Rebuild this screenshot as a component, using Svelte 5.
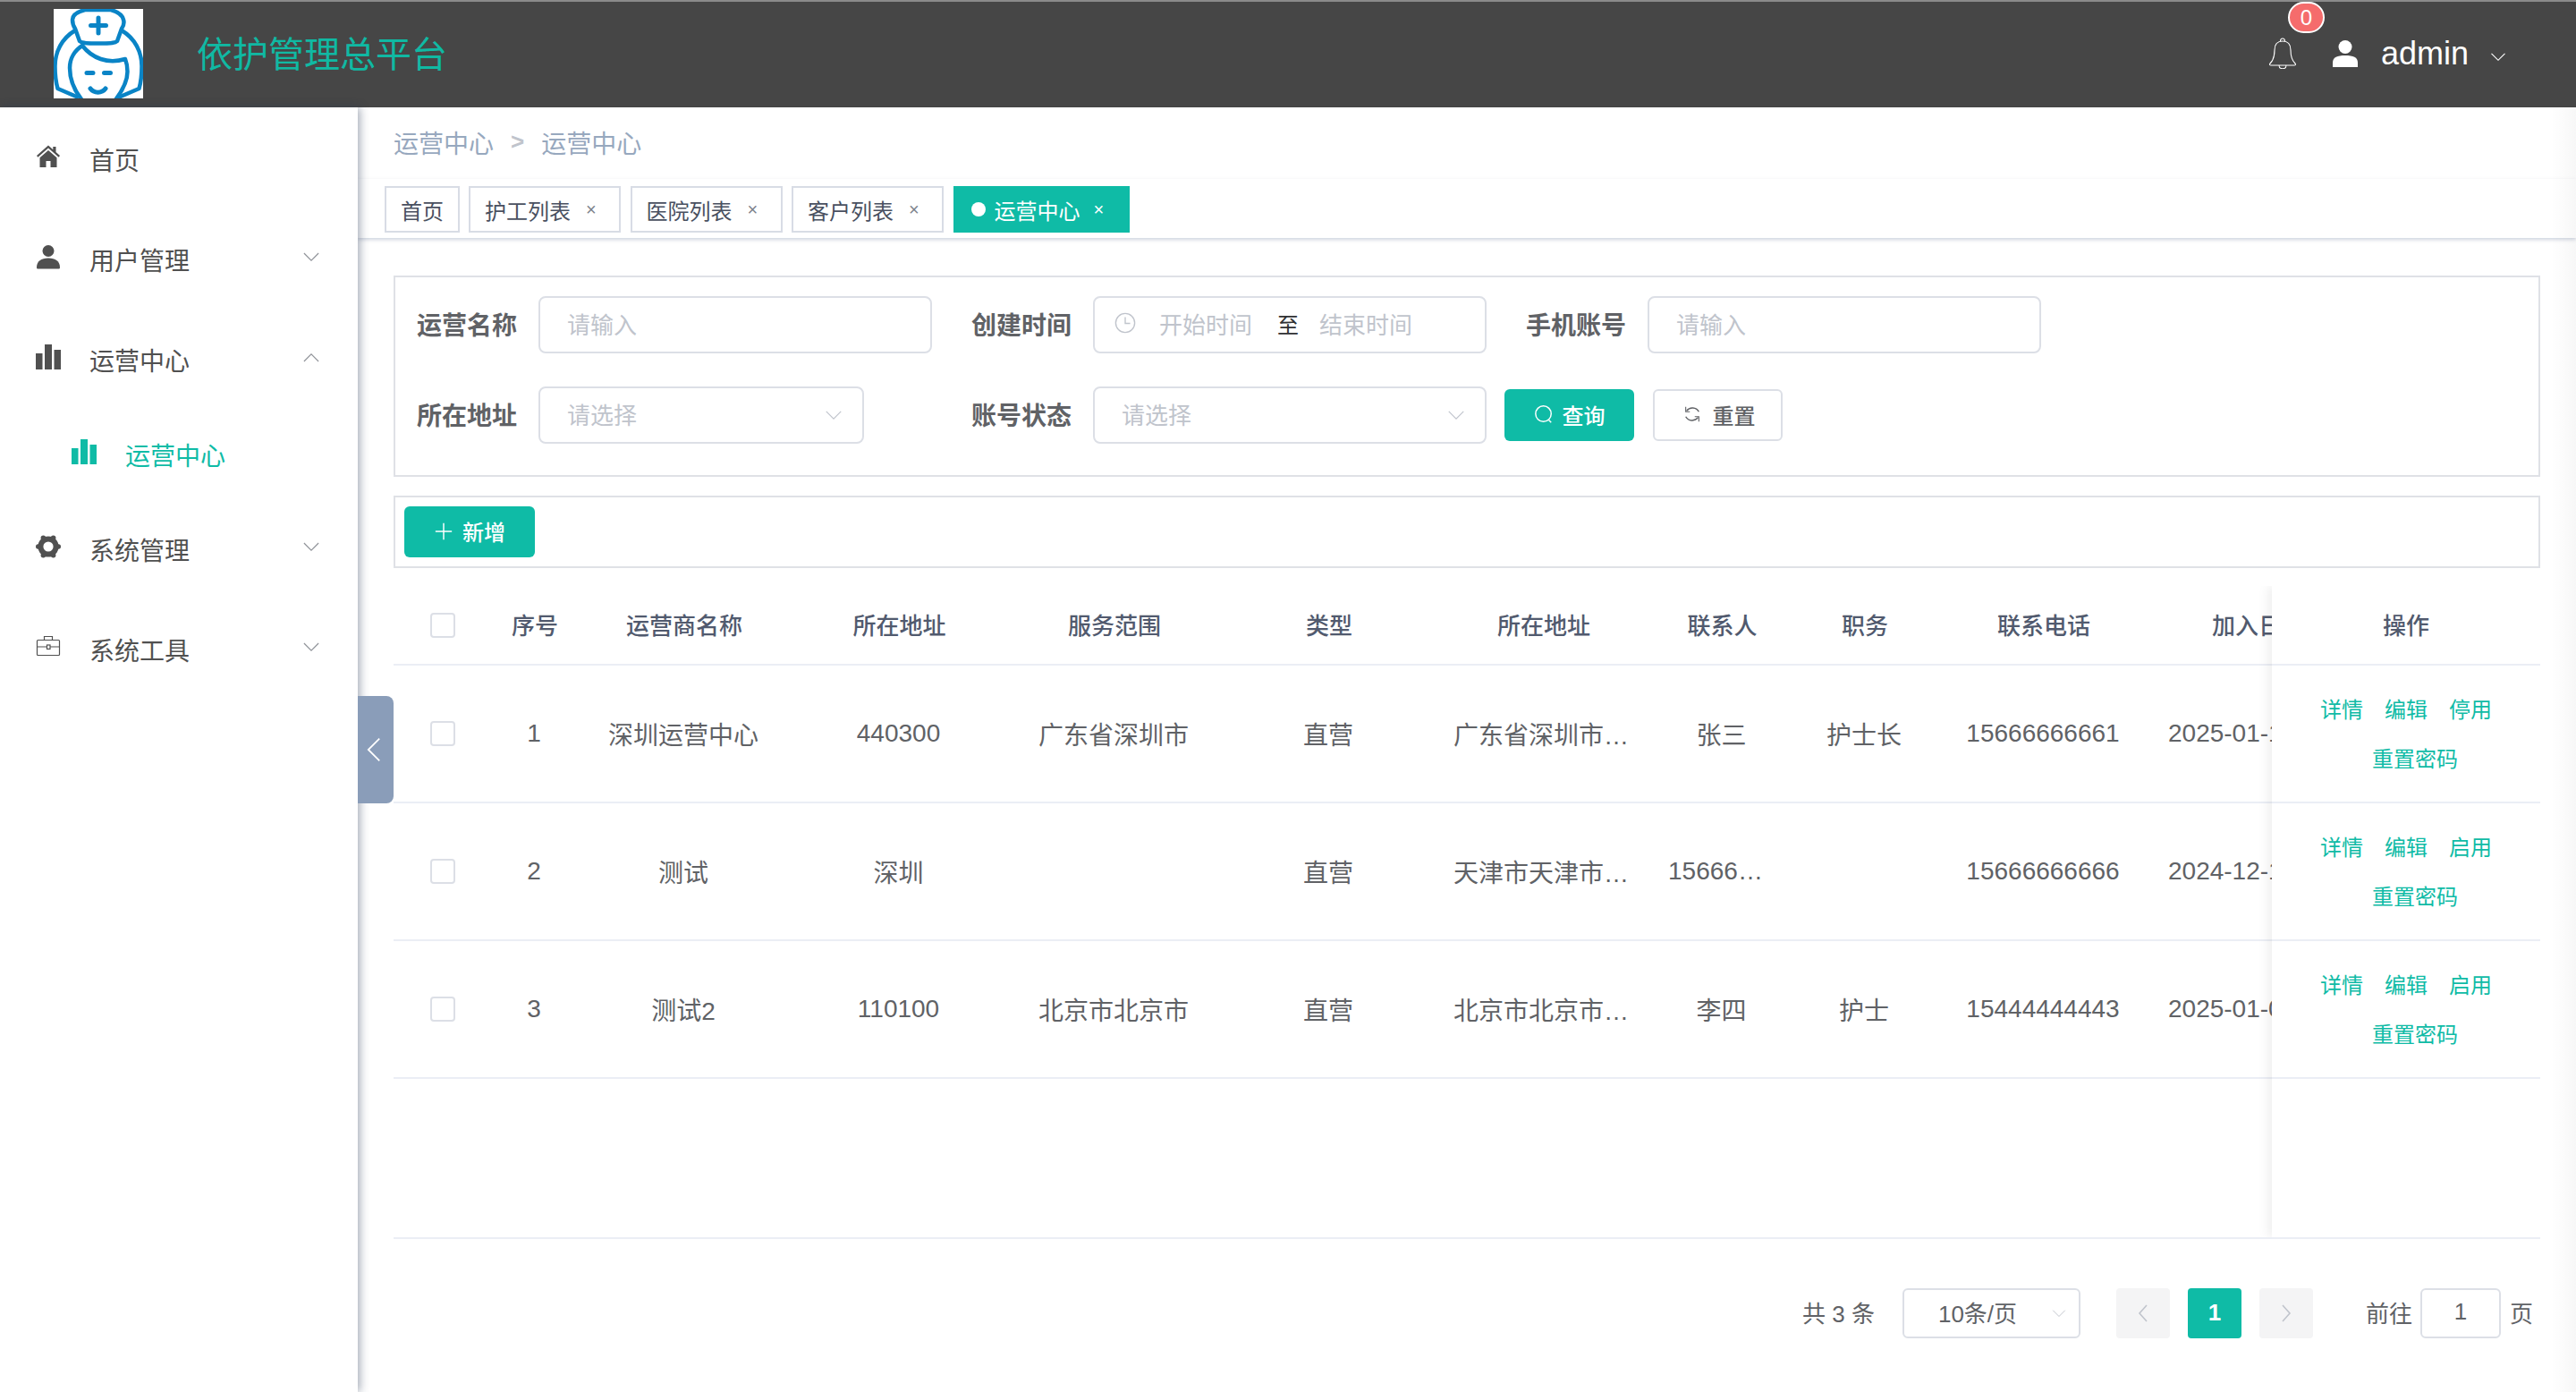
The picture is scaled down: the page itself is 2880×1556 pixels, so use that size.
<script>
  const menu = [
    { label: "首页", icon: "home", h: 112 },
    { label: "用户管理", icon: "user", h: 112, arrow: "down" },
    { label: "运营中心", icon: "chart", h: 112, arrow: "up" },
    { label: "运营中心", icon: "chart", h: 100, sub: true },
    { label: "系统管理", icon: "gear", h: 112, arrow: "down" },
    { label: "系统工具", icon: "case", h: 112, arrow: "down" }
  ];

  const tabs = ["护工列表", "医院列表", "客户列表"];

  const columns = [
    { title: "序号", key: "no", width: 94 },
    { title: "运营商名称", key: "name", width: 240 },
    { title: "所在地址", key: "code", width: 241 },
    { title: "服务范围", key: "scope", width: 240 },
    { title: "类型", key: "type", width: 240 },
    { title: "所在地址", key: "addr", width: 240 },
    { title: "联系人", key: "contact", width: 159 },
    { title: "职务", key: "job", width: 160 },
    { title: "联系电话", key: "phone", width: 240 },
    { title: "加入日期", key: "date", width: 240 }
  ];

  const rows = [
    { no: 1, name: "深圳运营中心", code: "440300", scope: "广东省深圳市", type: "直营", addr: "广东省深圳市南山区科技园", contact: "张三", job: "护士长", phone: "15666666661", date: "2025-01-10 10:20:30", toggle: "停用" },
    { no: 2, name: "测试", code: "深圳", scope: "", type: "直营", addr: "天津市天津市和平区南京路", contact: "15666666666", job: "", phone: "15666666666", date: "2024-12-18 09:12:45", toggle: "启用" },
    { no: 3, name: "测试2", code: "110100", scope: "北京市北京市", type: "直营", addr: "北京市北京市朝阳区建国路", contact: "李四", job: "护士", phone: "15444444443", date: "2025-01-06 16:40:12", toggle: "启用" }
  ];

  const lobes = [0, 60, 120, 180, 240, 300].map((deg) => ({
    x: 14 + 11.2 * Math.cos((deg * Math.PI) / 180),
    y: 14 + 11.2 * Math.sin((deg * Math.PI) / 180)
  }));
</script>

{#snippet chevron(dir, cls)}
  <svg class={cls} viewBox="0 0 20 12" fill="none" stroke="currentColor" stroke-width="1.3">
    {#if dir === "up"}
      <path d="M1 11 10 2l9 9" />
    {:else}
      <path d="M1 1l9 9 9-9" />
    {/if}
  </svg>
{/snippet}

{#snippet menuIcon(name)}
  <svg class="menu-icon" viewBox="0 0 28 28" fill="currentColor">
    {#if name === "home"}
      <path d="M14 1.500 1 13l1.400 1.700L14 4.600l11.600 10.100L27 13l-4.500-4V3h-3.200v3.200z" />
      <path d="M14 7 4.500 15.200V26h7v-7h5v7h7V15.200z" />
    {:else if name === "user"}
      <circle cx="14" cy="7.500" r="6.500" />
      <path d="M1 26c0-7 5-10.500 13-10.500S27 19 27 26c0 1-.7 1.500-1.500 1.500h-23C1.700 27.500 1 27 1 26z" />
    {:else if name === "chart"}
      <rect x="0" y="10" width="7.500" height="18" />
      <rect x="10" y="0" width="8" height="28" />
      <rect x="20.500" y="6" width="7.500" height="22" />
    {:else if name === "gear"}
      <circle cx="14" cy="14" r="8.600" fill="none" stroke="currentColor" stroke-width="6" />
      {#each lobes as lobe}
        <circle cx={lobe.x} cy={lobe.y} r="2.800" />
      {/each}
    {:else}
      <g fill="none" stroke="currentColor" stroke-width="1.200">
        <rect x="1.500" y="6.500" width="25" height="17" rx="1" />
        <path d="M9.500 6.500V2.500h9v4M1.500 14h11M16 14h10.500" />
        <rect x="12.500" y="12" width="3.500" height="4.500" />
      </g>
    {/if}
  </svg>
{/snippet}

<div class="page">
  <header class="topbar">
    <svg class="logo" viewBox="0 0 100 100">
      <rect width="100" height="100" fill="#fff" />
      <g fill="none" stroke="#0a84c6" stroke-width="4.500" stroke-linecap="round" stroke-linejoin="round">
        <path d="M24 24C9 33 1.500 48 1.500 64c0 9 1 18 3 25l21 9" />
        <path d="M76 24c15 9 22.500 24 22.500 40 0 9-1 18-3 25l-21 9" />
        <path d="M35 1C27 3 21 7 21 12c0 3 1 7 3 10l5 14c2 2 6 2.500 21 2.500S69 38 71 36l5-14c2-3 3-7 2-10-1-5-7-9-14-11z" fill="#fff" />
        <path d="M50 10v17M41.500 18.500h17" stroke-width="5" />
        <path d="M32 41C24 46 18 55 18 66c0 13 6 26 13 35M32 41c11 14 28 21 48 15 2 5 2.500 10 2.500 14 0 12-7 23-13 31" />
        <path d="M37 71.500h7M56.500 71.500h7M41 89c4 5.500 13 5.500 17 0" stroke-width="5" />
      </g>
    </svg>
    <h1 class="brand">依护管理总平台</h1>
    <div class="top-right">
      <div class="bell-wrap">
        <svg class="bell" viewBox="0 0 32 36" fill="none" stroke="#fff" stroke-width="1.100">
          <path d="M16 5c-6 0-9 4-9 10 0 7-1 11-5 15-1 1-.5 2 1 2h26c1.500 0 2-1 1-2-4-4-5-8-5-15 0-6-3-10-9-10zM13.500 5c0-4 5-4 5 0M12 32c0 5 8 5 8 0" />
        </svg>
        <span class="badge">0</span>
      </div>
      <svg class="top-user" viewBox="0 0 28 30" fill="#fff">
        <circle cx="14" cy="7.500" r="7.500" />
        <path d="M0 30v-5c0-6 5-8 14-8s14 2 14 8v5z" />
      </svg>
      <span class="admin">admin</span>
      {@render chevron("down", "top-arrow")}
    </div>
  </header>

  <div class="body">
    <aside class="sidebar">
      {#each menu as item}
        <div class="menu-row" class:sub={item.sub} style="height: {item.h}px;">
          {@render menuIcon(item.icon)}
          <span class="menu-label">{item.label}</span>
          {#if item.arrow}
            {@render chevron(item.arrow, "menu-arrow")}
          {/if}
        </div>
      {/each}
    </aside>

    <main class="main">
      <button class="collapse" aria-label="收起">
        <svg viewBox="0 0 18 30" fill="none" stroke="#fff" stroke-width="2"><path d="M16 1 2 15l14 14" /></svg>
      </button>

      <nav class="crumbs">
        <span>运营中心</span>
        <span class="sep">&gt;</span>
        <span>运营中心</span>
      </nav>

      <div class="tabs">
        <span class="tab home">首页</span>
        {#each tabs as tab}
          <span class="tab">{tab}<i class="close">×</i></span>
        {/each}
        <span class="tab active"><b class="dot"></b>运营中心<i class="close">×</i></span>
      </div>

      <div class="content">
        <section class="filter">
          <div class="row">
            <div class="item">
              <span class="label">运营名称</span>
              <div class="field wide"><span class="ph">请输入</span></div>
            </div>
            <div class="item">
              <span class="label">创建时间</span>
              <div class="field wide date">
                <svg class="clock" viewBox="0 0 26 26" fill="none" stroke="#c0c4cc" stroke-width="1.500">
                  <circle cx="13" cy="13" r="11.500" /><path d="M13 6v7.500h6" />
                </svg>
                <span class="ph start">开始时间</span>
                <span class="to">至</span>
                <span class="ph">结束时间</span>
              </div>
            </div>
            <div class="item last">
              <span class="label">手机账号</span>
              <div class="field wide"><span class="ph">请输入</span></div>
            </div>
          </div>
          <div class="row second">
            <div class="item short">
              <span class="label">所在地址</span>
              <div class="field select narrow"><span class="ph">请选择</span>{@render chevron("down", "sel-arrow")}</div>
            </div>
            <div class="item tight">
              <span class="label">账号状态</span>
              <div class="field select wide"><span class="ph">请选择</span>{@render chevron("down", "sel-arrow")}</div>
            </div>
            <button class="btn primary">
              <svg class="btn-icon" viewBox="0 0 24 24" fill="none" stroke="currentColor" stroke-width="1.600">
                <circle cx="11.500" cy="11.500" r="9.500" /><path d="m18 19 3 3" />
              </svg>查询
            </button>
            <button class="btn plain">
              <svg class="btn-icon" viewBox="0 0 24 24" fill="none" stroke="currentColor" stroke-width="1.600">
                <path d="M5 8a9 9 0 0 1 15 1M19 16a9 9 0 0 1-15-1" /><path d="M4 3v6h5M20 21v-6h-5" stroke-width="1.200" />
              </svg>重置
            </button>
          </div>
        </section>

        <section class="actions">
          <button class="btn primary add">
            <svg class="btn-icon" viewBox="0 0 24 24" fill="none" stroke="currentColor" stroke-width="1.600"><path d="M12 2v20M2 12h20" /></svg>新增
          </button>
        </section>

        <section class="table">
          <div class="scroll">
            <div class="tr head">
              <div class="cell check"><span class="box"></span></div>
              {#each columns as col}
                <div class="cell" style="width: {col.width}px;">{col.title}</div>
              {/each}
            </div>
            {#each rows as row}
              <div class="tr">
                <div class="cell check"><span class="box"></span></div>
                {#each columns as col}
                  <div class="cell" style="width: {col.width}px;"><span class="ell">{row[col.key]}</span></div>
                {/each}
              </div>
            {/each}
          </div>
          <div class="fixed">
            <div class="fx head">操作</div>
            {#each rows as row}
              <div class="fx links">
                <a href="#a">详情</a><a href="#a">编辑</a><a href="#a">{row.toggle}</a><a href="#a" class="reset">重置密码</a>
              </div>
            {/each}
          </div>
        </section>

        <footer class="pager">
          <span>共 3 条</span>
          <div class="page-size">10条/页{@render chevron("down", "size-arrow")}</div>
          <span class="pg off">
            <svg viewBox="0 0 12 20" fill="none" stroke="currentColor" stroke-width="1.600"><path d="M10 1 2 10l8 9" /></svg>
          </span>
          <span class="pg on">1</span>
          <span class="pg off">
            <svg viewBox="0 0 12 20" fill="none" stroke="currentColor" stroke-width="1.600"><path d="m2 1 8 9-8 9" /></svg>
          </span>
          <span class="goto">前往</span>
          <div class="jump">1</div>
          <span>页</span>
        </footer>
      </div>
    </main>
  </div>
</div>

<style>
  :global(body) {
    margin: 0;
    background: #fff;
  }

  .page {
    width: 2880px;
    height: 1556px;
    overflow: hidden;
    display: flex;
    flex-direction: column;
    font-family: "Liberation Sans", "Noto Sans CJK SC", sans-serif;
    color: #606266;
  }

  /* top bar */
  .topbar {
    height: 120px;
    box-sizing: border-box;
    flex: none;
    display: flex;
    align-items: center;
    padding-left: 60px;
    background: #464646;
    border-top: 2px solid #8a8a8a;
  }

  .logo {
    width: 100px;
    height: 100px;
    flex: none;
    margin-top: -2px;
  }

  .brand {
    margin: -6px 0 0 60px;
    font-size: 40px;
    font-weight: 400;
    color: #10b9a3;
  }

  .top-right {
    margin-left: auto;
    display: flex;
    align-items: center;
    padding-right: 78px;
    color: #fff;
  }

  .bell-wrap {
    position: relative;
    width: 32px;
    height: 36px;
    margin-top: -4px;
    margin-right: 40px;
  }

  .bell {
    width: 32px;
    height: 36px;
    display: block;
  }

  .badge {
    position: absolute;
    left: 22px;
    top: -39px;
    width: 41px;
    height: 35px;
    box-sizing: border-box;
    border: 2px solid #fff;
    border-radius: 18px;
    background: #f56c6c;
    font-size: 24px;
    line-height: 31px;
    text-align: center;
    color: #fff;
  }

  .top-user {
    width: 28px;
    height: 30px;
    margin-top: -3px;
    margin-right: 26px;
  }

  .admin {
    font-size: 36px;
    margin-top: -2px;
    line-height: 40px;
  }

  .top-arrow {
    width: 18px;
    height: 10px;
    margin: 6px 0 0 24px;
  }

  /* sidebar */
  .body {
    flex: 1;
    display: flex;
    min-height: 0;
  }

  .sidebar {
    width: 400px;
    flex: none;
    box-sizing: border-box;
    padding-top: 5px;
    background: #fff;
    box-shadow: 2px 0 10px rgba(40, 55, 85, 0.45);
    position: relative;
    z-index: 2;
  }

  .menu-row {
    display: flex;
    align-items: center;
    padding-left: 40px;
    color: #505050;
  }

  .menu-row.sub {
    padding-left: 80px;
    color: #0fbba6;
  }

  .menu-icon {
    width: 28px;
    height: 28px;
    flex: none;
    margin-top: -12px;
  }

  .menu-label {
    margin-left: 32px;
    font-size: 28px;
    line-height: 40px;
  }

  .menu-arrow {
    width: 18px;
    height: 11px;
    margin: -12px 43px 0 auto;
    color: #909399;
  }

  /* main */
  .main {
    flex: 1;
    min-width: 0;
    position: relative;
    display: flex;
    flex-direction: column;
  }

  .main::after {
    content: "";
    position: absolute;
    top: 0;
    right: 0;
    bottom: 0;
    width: 28px;
    background: linear-gradient(to right, rgba(0, 0, 0, 0), rgba(0, 0, 0, 0.03));
    pointer-events: none;
    z-index: 4;
  }

  .collapse {
    position: absolute;
    left: 0;
    top: 658px;
    width: 40px;
    height: 120px;
    padding: 0 4px 0 0;
    border: 0;
    border-radius: 0 8px 8px 0;
    background: #8a9db9;
    display: flex;
    align-items: center;
    justify-content: center;
    z-index: 3;
  }

  .collapse svg {
    width: 16px;
    height: 28px;
  }

  .crumbs {
    height: 80px;
    flex: none;
    box-sizing: border-box;
    padding: 0 0 3px 40px;
    display: flex;
    align-items: center;
    font-size: 28px;
    color: #97a8be;
    box-shadow: 0 1px 4px rgba(0, 0, 0, 0.05);
  }

  .sep {
    margin: 0 19px;
    color: #c0c4cc;
    font-size: 26px;
    font-weight: 700;
  }

  .tabs {
    height: 66px;
    flex: none;
    box-sizing: border-box;
    display: flex;
    gap: 10.500px;
    padding: 8px 0 0 30px;
    background: #fff;
    box-shadow: 0 2px 4px rgba(80, 100, 140, 0.28);
    position: relative;
  }

  .tab {
    height: 52px;
    box-sizing: border-box;
    display: flex;
    align-items: center;
    padding: 0 16px 0 16px;
    border: 2px solid #d8dce5;
    font-size: 24px;
    color: #495060;
    width: 170px;
    white-space: nowrap;
  }

  .tab.home {
    width: 84px;
    margin-right: -0.500px;
  }

  .tab.active {
    width: 197px;
    padding-left: 18px;
    background: #0fbba6;
    border-color: #0fbba6;
    color: #fff;
  }

  .dot {
    width: 16px;
    height: 16px;
    border-radius: 50%;
    background: #fff;
    margin-right: 10px;
    flex: none;
  }

  .close {
    font-style: normal;
    font-size: 20px;
    margin-left: 17px;
    color: #7d828c;
  }

  .active .close {
    margin-left: 15px;
    color: inherit;
  }

  .content {
    flex: 1;
    min-height: 0;
    padding: 42px 40px 0;
  }

  /* filter form */
  .filter {
    height: 225px;
    box-sizing: border-box;
    border: 2px solid #dfe1e6;
    padding: 21px 0 0 24px;
  }

  .row {
    display: flex;
    align-items: center;
    height: 64px;
  }

  .row.second {
    margin-top: 37px;
  }

  .item {
    display: flex;
    align-items: center;
    margin-right: 44px;
  }

  .item.short {
    margin-right: 120px;
  }

  .item.tight {
    margin-right: 20px;
  }

  .item.last {
    margin-right: 0;
  }

  .label {
    width: 136px;
    margin-top: -3px;
    font-size: 28px;
    font-weight: 700;
    color: #606266;
    white-space: nowrap;
  }

  .field {
    height: 64px;
    box-sizing: border-box;
    display: flex;
    align-items: center;
    padding: 0 0 4px 30px;
    border: 2px solid #dcdfe6;
    border-radius: 8px;
    background: #fff;
  }

  .wide {
    width: 440px;
  }

  .narrow {
    width: 364px;
  }

  .ph {
    font-size: 26px;
    color: #c0c4cc;
  }

  .field.date {
    padding-left: 22px;
  }

  .clock {
    width: 24px;
    height: 24px;
    flex: none;
  }

  .start {
    margin-left: 26px;
  }

  .to {
    margin: 0 23px 0 28px;
    font-size: 24px;
    color: #303133;
  }

  .sel-arrow {
    width: 20px;
    height: 11px;
    margin: 4px 22px 0 auto;
    color: #c0c4cc;
  }

  .btn {
    height: 58px;
    width: 145px;
    box-sizing: border-box;
    display: flex;
    align-items: center;
    justify-content: center;
    padding: 0 0 2px;
    border-radius: 6px;
    font-family: inherit;
    font-size: 24px;
    font-weight: 500;
  }

  .btn-icon {
    width: 22px;
    height: 22px;
    margin-right: 10px;
  }

  .primary {
    border: 0;
    background: #0fbba6;
    color: #fff;
  }

  .plain {
    margin-left: 21px;
    padding-left: 2px;
    border: 2px solid #dcdfe6;
    background: #fff;
    color: #606266;
  }

  .plain .btn-icon {
    margin-right: 12px;
  }

  .actions {
    height: 81px;
    box-sizing: border-box;
    margin-top: 21px;
    padding: 10px;
    border: 2px solid #dfe1e6;
  }

  .add {
    height: 57px;
    width: 146px;
  }

  /* table */
  .table {
    display: flex;
    height: 730px;
    margin-top: 20px;
    border-bottom: 2px solid #ebeef5;
    box-sizing: border-box;
  }

  .scroll {
    flex: 1;
    min-width: 0;
    overflow: hidden;
  }

  .tr {
    display: flex;
    height: 154px;
    box-sizing: border-box;
    border-bottom: 2px solid #ebeef5;
    font-size: 28px;
    width: 2240px;
  }

  .tr.head {
    height: 89px;
    font-size: 26px;
    font-weight: 500;
    color: #515a6e;
  }

  .cell {
    flex: none;
    box-sizing: border-box;
    padding: 0 20px;
    display: flex;
    align-items: center;
    justify-content: center;
  }

  .tr.head .cell {
    padding: 0 19px 2px 21px;
    white-space: nowrap;
  }

  .tr.head .cell.check {
    padding: 0 20px;
  }

  .cell.check {
    width: 110px;
  }

  .box {
    width: 28px;
    height: 28px;
    box-sizing: border-box;
    border: 2px solid #dcdfe6;
    border-radius: 4px;
  }

  .ell {
    display: block;
    min-width: 0;
    max-width: 100%;
    overflow: hidden;
    white-space: nowrap;
    text-overflow: ellipsis;
    text-align: center;
  }

  .fixed {
    width: 300px;
    flex: none;
    background: #fff;
    box-shadow: -4px 0 12px rgba(0, 0, 0, 0.07);
    clip-path: inset(0 0 0 -24px);
    position: relative;
    height: 728px;
  }

  .fx {
    height: 154px;
    box-sizing: border-box;
    border-bottom: 2px solid #ebeef5;
  }

  .fx.head {
    height: 89px;
    display: flex;
    align-items: center;
    justify-content: center;
    padding-bottom: 2px;
    font-size: 26px;
    font-weight: 500;
    color: #515a6e;
  }

  .links {
    display: flex;
    flex-wrap: wrap;
    align-content: center;
    justify-content: center;
    column-gap: 24px;
    row-gap: 21px;
    padding: 2px 20px 0;
    font-size: 24px;
    line-height: 34px;
  }

  .links a {
    color: #0fbba6;
    text-decoration: none;
  }

  .links .reset {
    margin-left: 20px;
  }

  /* pagination */
  .pager {
    height: 56px;
    margin-top: 55px;
    display: flex;
    align-items: center;
    padding-left: 1575px;
    font-size: 26px;
    color: #606266;
    white-space: nowrap;
  }

  .pager > span:not(.pg),
  .page-size,
  .jump {
    padding-bottom: 3px;
  }

  .page-size {
    width: 199px;
    height: 56px;
    box-sizing: border-box;
    margin: 0 40px 0 31px;
    padding-left: 38px;
    display: flex;
    align-items: center;
    border: 2px solid #dcdfe6;
    border-radius: 6px;
  }

  .size-arrow {
    width: 16px;
    height: 9px;
    margin: 3px 14px 0 auto;
    color: #c0c4cc;
  }

  .pg {
    width: 60px;
    height: 56px;
    margin-right: 20px;
    display: flex;
    align-items: center;
    justify-content: center;
    border-radius: 4px;
    font-weight: 700;
  }

  .pg svg {
    width: 12px;
    height: 20px;
  }

  .pg.off {
    background: #f4f4f5;
    color: #c0c4cc;
  }

  .pg.on {
    background: #0fbba6;
    color: #fff;
    padding-bottom: 2px;
    box-sizing: border-box;
  }

  .goto {
    margin-left: 39px;
  }

  .jump {
    width: 90px;
    height: 56px;
    box-sizing: border-box;
    margin: 0 10px 0 9px;
    display: flex;
    align-items: center;
    justify-content: center;
    border: 2px solid #dcdfe6;
    border-radius: 6px;
  }
</style>
